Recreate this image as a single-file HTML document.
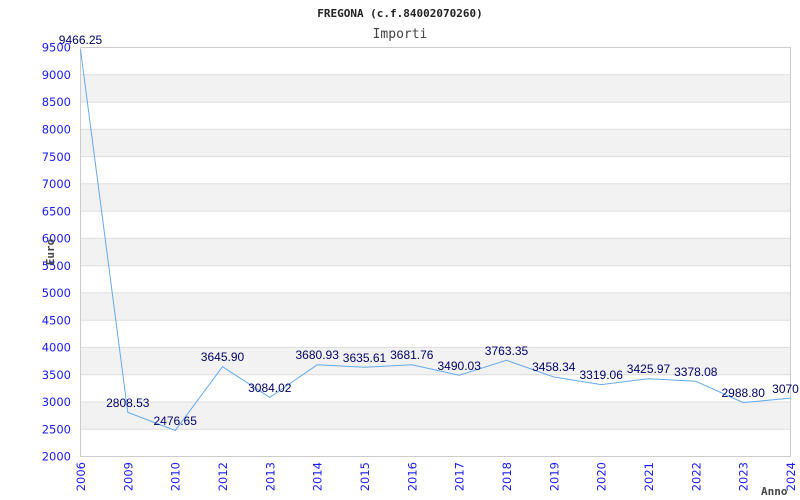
<!DOCTYPE html>
<html><head><style>body{margin:0;background:#fff}svg{display:block}</style></head><body>
<svg width="800" height="500" xmlns="http://www.w3.org/2000/svg">
<rect width="800" height="500" fill="#fff"/>
<g fill="#f2f2f2">
<rect x="80.5" y="74.8" width="710" height="27.3"/>
<rect x="80.5" y="129.3" width="710" height="27.3"/>
<rect x="80.5" y="183.8" width="710" height="27.3"/>
<rect x="80.5" y="238.4" width="710" height="27.3"/>
<rect x="80.5" y="292.9" width="710" height="27.3"/>
<rect x="80.5" y="347.4" width="710" height="27.3"/>
<rect x="80.5" y="402" width="710" height="27.3"/>
</g>
<g stroke="#dddddd" stroke-width="1">
<line x1="80.5" x2="790.5" y1="74.8" y2="74.8"/><line x1="80.5" x2="790.5" y1="102.1" y2="102.1"/>
<line x1="80.5" x2="790.5" y1="129.3" y2="129.3"/><line x1="80.5" x2="790.5" y1="156.6" y2="156.6"/>
<line x1="80.5" x2="790.5" y1="183.8" y2="183.8"/><line x1="80.5" x2="790.5" y1="211.1" y2="211.1"/>
<line x1="80.5" x2="790.5" y1="238.4" y2="238.4"/><line x1="80.5" x2="790.5" y1="265.7" y2="265.7"/>
<line x1="80.5" x2="790.5" y1="292.9" y2="292.9"/><line x1="80.5" x2="790.5" y1="320.2" y2="320.2"/>
<line x1="80.5" x2="790.5" y1="347.4" y2="347.4"/><line x1="80.5" x2="790.5" y1="374.7" y2="374.7"/>
<line x1="80.5" x2="790.5" y1="402" y2="402"/><line x1="80.5" x2="790.5" y1="429.3" y2="429.3"/>
</g>
<rect x="80.5" y="47.5" width="710" height="409" fill="none" stroke="#cccccc"/>
<polyline fill="none" stroke="#66aaee" stroke-width="1" points="80.5,49.3 127.8,412.4 175.2,430.5 222.5,366.7 269.8,397.4 317.2,364.8 364.5,367.3 411.8,364.8 459.2,375.2 506.5,360.3 553.8,377 601.2,384.6 648.5,378.7 695.8,381.3 743.2,402.6 790.5,398.1"/>
<g font-family="Liberation Sans, sans-serif" font-size="12" fill="#000066" text-anchor="middle">
<text x="80.5" y="44">9466.25</text><text x="127.8" y="407">2808.53</text><text x="175.2" y="425">2476.65</text>
<text x="222.5" y="361">3645.90</text><text x="269.8" y="392">3084.02</text><text x="317.2" y="359">3680.93</text>
<text x="364.5" y="362">3635.61</text><text x="411.8" y="359">3681.76</text><text x="459.2" y="370">3490.03</text>
<text x="506.5" y="355">3763.35</text><text x="553.8" y="371">3458.34</text><text x="601.2" y="379">3319.06</text>
<text x="648.5" y="373">3425.97</text><text x="695.8" y="376">3378.08</text><text x="743.2" y="397">2988.80</text>
<text x="790.5" y="393">3070.1</text>
</g>
<g font-family="DejaVu Sans, sans-serif" font-size="11.5" fill="#1a1aff" text-anchor="end">
<text x="71" y="51.5">9500</text><text x="71" y="79">9000</text><text x="71" y="106">8500</text>
<text x="71" y="133.5">8000</text><text x="71" y="161">7500</text><text x="71" y="188">7000</text>
<text x="71" y="215.5">6500</text><text x="71" y="242.5">6000</text><text x="71" y="270">5500</text>
<text x="71" y="297">5000</text><text x="71" y="324.5">4500</text><text x="71" y="351.5">4000</text>
<text x="71" y="379">3500</text><text x="71" y="406">3000</text><text x="71" y="433.5">2500</text>
<text x="71" y="460.5">2000</text>
</g>
<g font-family="DejaVu Sans, sans-serif" font-size="11.5" fill="#1a1aff" text-anchor="end">
<text transform="translate(85,462) rotate(-90)">2006</text>
<text transform="translate(132.3,462) rotate(-90)">2009</text>
<text transform="translate(179.7,462) rotate(-90)">2010</text>
<text transform="translate(227,462) rotate(-90)">2012</text>
<text transform="translate(274.3,462) rotate(-90)">2013</text>
<text transform="translate(321.7,462) rotate(-90)">2014</text>
<text transform="translate(369,462) rotate(-90)">2015</text>
<text transform="translate(416.3,462) rotate(-90)">2016</text>
<text transform="translate(463.7,462) rotate(-90)">2017</text>
<text transform="translate(511,462) rotate(-90)">2018</text>
<text transform="translate(558.3,462) rotate(-90)">2019</text>
<text transform="translate(605.7,462) rotate(-90)">2020</text>
<text transform="translate(653,462) rotate(-90)">2021</text>
<text transform="translate(700.3,462) rotate(-90)">2022</text>
<text transform="translate(747.7,462) rotate(-90)">2023</text>
<text transform="translate(795,462) rotate(-90)">2024</text>
</g>
<text x="400" y="17" font-family="DejaVu Sans Mono, monospace" font-size="11" font-weight="bold" fill="#222" text-anchor="middle">FREGONA (c.f.84002070260)</text>
<text x="400" y="38" font-family="DejaVu Sans Mono, monospace" font-size="13" fill="#444" text-anchor="middle">Importi</text>
<text transform="translate(54,252) rotate(-90)" font-family="DejaVu Sans Mono, monospace" font-size="11" font-weight="bold" fill="#444" text-anchor="middle">Euro</text>
<text x="761" y="495" font-family="DejaVu Sans Mono, monospace" font-size="11" font-weight="bold" fill="#444">Anno</text>
</svg>
</body></html>
